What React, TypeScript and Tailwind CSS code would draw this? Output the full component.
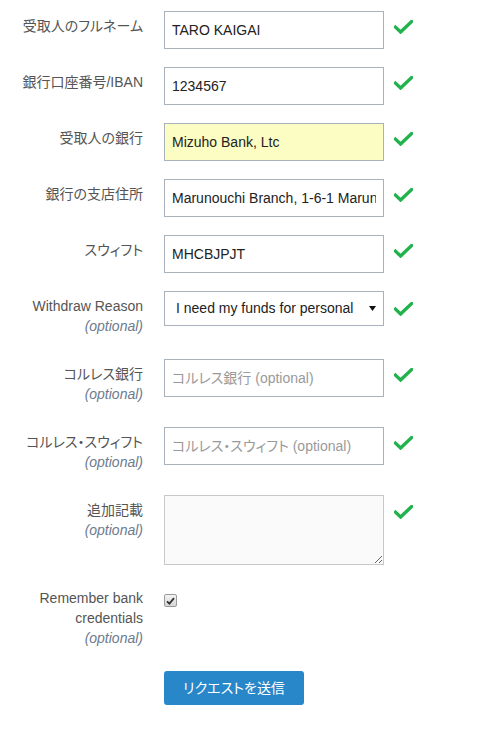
import React from "react";

const FONT = '"Liberation Sans", Arial, "Noto Sans CJK JP", sans-serif';

function Check() {
  return (
    <svg width="19" height="14" viewBox="0 0 19 14" className="block">
      <path d="M1.5 7.2 L6.6 12 L17.6 1.6" fill="none" stroke="#22b24c" strokeWidth="3.4" strokeLinecap="square" />
    </svg>
  );
}

function Row({
  label,
  optional,
  children,
  check = true,
  checkTop = "mt-[9px]",
}: {
  label: React.ReactNode;
  optional?: boolean;
  children: React.ReactNode;
  check?: boolean;
  checkTop?: string;
}) {
  return (
    <div className="flex items-start mb-[18px]">
      <div className="w-[143px] shrink-0 text-right pt-[5px] pb-[5px] text-[14px] leading-5 text-[#555]">
        <div>{label}</div>
        {optional && <div className="italic text-[#6d7b8d]">(optional)</div>}
      </div>
      <div className="ml-[21px] w-[220px] shrink-0">{children}</div>
      {check && <div className={`ml-[10px] ${checkTop}`}><Check /></div>}
    </div>
  );
}

const inputCls =
  "block w-full h-[38px] border border-[#a9b1bd] bg-white px-[7px] text-[14px] text-[#222] outline-none placeholder:text-[#9a9a9a] [font-feature-settings:'palt']";

export default function App() {
  return (
    <div className="bg-white w-[490px] min-h-[731px] pt-[11px] [font-feature-settings:'palt']" style={{ fontFamily: FONT }}>
      <Row label="受取人のフルネーム">
        <input className={inputCls} readOnly value="TARO KAIGAI" style={{ fontFamily: FONT }} />
      </Row>
      <Row label="銀行口座番号/IBAN">
        <input className={inputCls} readOnly value="1234567" style={{ fontFamily: FONT }} />
      </Row>
      <Row label="受取人の銀行">
        <input className={`${inputCls} !bg-[#fbfdc2]`} readOnly value="Mizuho Bank, Ltc" style={{ fontFamily: FONT }} />
      </Row>
      <Row label="銀行の支店住所">
        <input
          className={inputCls}
          readOnly
          value="Marunouchi Branch, 1-6-1 Marunouchi, Chiyoda-ku"
          style={{ fontFamily: FONT }}
        />
      </Row>
      <Row label="スウィフト">
        <input className={inputCls} readOnly value="MHCBJPJT" style={{ fontFamily: FONT }} />
      </Row>
      <Row label="Withdraw Reason" optional checkTop="mt-[11px]">
        <div className="flex items-center h-[35px] border border-[#a9b1bd] bg-white pl-[11px] pr-[7px] text-[14px] text-[#222]">
          <span className="flex-1 whitespace-nowrap">I need my funds for personal</span>
          <svg width="7" height="5" viewBox="0 0 7 5" className="ml-[8px] shrink-0">
            <path d="M0 0 L7 0 L3.5 5 Z" fill="#111" />
          </svg>
        </div>
      </Row>
      <Row label="コルレス銀行" optional>
        <input className={inputCls} placeholder="コルレス銀行 (optional)" style={{ fontFamily: FONT }} />
      </Row>
      <Row label="コルレス・スウィフト" optional>
        <input className={inputCls} placeholder="コルレス・スウィフト (optional)" style={{ fontFamily: FONT }} />
      </Row>
      <Row label="追加記載" optional checkTop="mt-[10px]">
        <textarea
          className="block w-full h-[70px] border border-[#c8c8c8] bg-[#fafafa] px-[7px] py-[5px] text-[14px] outline-none"
          style={{ fontFamily: FONT }}
        />
      </Row>
      <Row
        label={
          <>
            Remember bank
            <br />
            credentials
          </>
        }
        optional
        check={false}
      >
        <div className="mt-[11px] w-[13px] h-[13px] rounded-[2px] border border-[#9a9a9a] bg-gradient-to-b from-[#f4f4f4] to-[#d6d6d6] flex items-center justify-center">
          <svg width="9" height="8" viewBox="0 0 9 8">
            <path d="M1 4.3 L3.4 6.6 L8 1.2" fill="none" stroke="#333" strokeWidth="1.8" />
          </svg>
        </div>
      </Row>
      <div className="flex">
        <div className="w-[143px] shrink-0" />
        <button
          className="ml-[21px] w-[140px] h-[34px] rounded-[3px] bg-[#2887c9] text-white text-[14px] leading-5 [font-feature-settings:'palt']"
          style={{ fontFamily: FONT }}
        >
          リクエストを送信
        </button>
      </div>
    </div>
  );
}
